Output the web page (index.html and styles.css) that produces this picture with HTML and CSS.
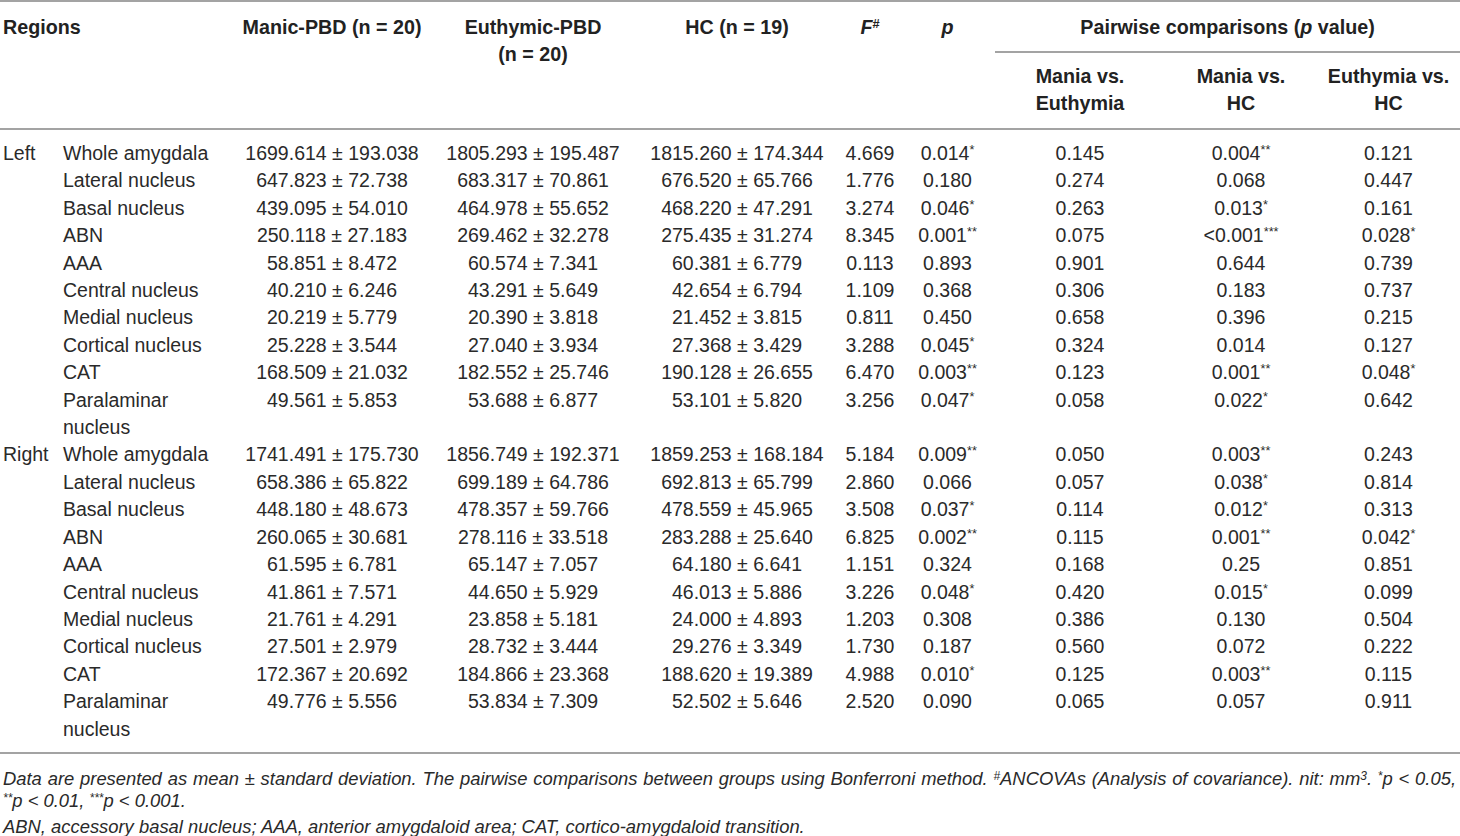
FILE: index.html
```html
<!DOCTYPE html>
<html>
<head>
<meta charset="utf-8">
<link rel="stylesheet" href="styles.css">
</head>
<body>
<table class="tbl">
  <colgroup>
    <col class="c1"><col class="c2"><col class="c3"><col class="c4"><col class="c5">
    <col class="c6"><col class="c7"><col class="c8"><col class="c9"><col class="c10">
  </colgroup>
  <thead>
    <tr class="h1">
      <th colspan="2" rowspan="2" class="left">Regions</th>
      <th rowspan="2">Manic-PBD (n = 20)</th>
      <th rowspan="2">Euthymic-PBD<br>(n = 20)</th>
      <th rowspan="2">HC (n = 19)</th>
      <th rowspan="2"><i>F</i><sup class="s">#</sup></th>
      <th rowspan="2"><i>p</i></th>
      <th colspan="3" class="pw">Pairwise comparisons (<i>p</i> value)</th>
    </tr>
    <tr class="h2">
      <th>Mania vs.<br>Euthymia</th>
      <th>Mania vs.<br>HC</th>
      <th>Euthymia vs.<br>HC</th>
    </tr>
  </thead>
  <tbody>
    <tr class="first">
      <td class="side" rowspan="10">Left</td>
      <td class="reg">Whole amygdala</td><td>1699.614 ± 193.038</td><td>1805.293 ± 195.487</td><td>1815.260 ± 174.344</td><td>4.669</td><td>0.014<sup class="s">*</sup></td><td>0.145</td><td>0.004<sup class="s">**</sup></td><td>0.121</td>
    </tr>
    <tr><td class="reg">Lateral nucleus</td><td>647.823 ± 72.738</td><td>683.317 ± 70.861</td><td>676.520 ± 65.766</td><td>1.776</td><td>0.180</td><td>0.274</td><td>0.068</td><td>0.447</td></tr>
    <tr><td class="reg">Basal nucleus</td><td>439.095 ± 54.010</td><td>464.978 ± 55.652</td><td>468.220 ± 47.291</td><td>3.274</td><td>0.046<sup class="s">*</sup></td><td>0.263</td><td>0.013<sup class="s">*</sup></td><td>0.161</td></tr>
    <tr><td class="reg">ABN</td><td>250.118 ± 27.183</td><td>269.462 ± 32.278</td><td>275.435 ± 31.274</td><td>8.345</td><td>0.001<sup class="s">**</sup></td><td>0.075</td><td>&lt;0.001<sup class="s">***</sup></td><td>0.028<sup class="s">*</sup></td></tr>
    <tr><td class="reg">AAA</td><td>58.851 ± 8.472</td><td>60.574 ± 7.341</td><td>60.381 ± 6.779</td><td>0.113</td><td>0.893</td><td>0.901</td><td>0.644</td><td>0.739</td></tr>
    <tr><td class="reg">Central nucleus</td><td>40.210 ± 6.246</td><td>43.291 ± 5.649</td><td>42.654 ± 6.794</td><td>1.109</td><td>0.368</td><td>0.306</td><td>0.183</td><td>0.737</td></tr>
    <tr><td class="reg">Medial nucleus</td><td>20.219 ± 5.779</td><td>20.390 ± 3.818</td><td>21.452 ± 3.815</td><td>0.811</td><td>0.450</td><td>0.658</td><td>0.396</td><td>0.215</td></tr>
    <tr><td class="reg">Cortical nucleus</td><td>25.228 ± 3.544</td><td>27.040 ± 3.934</td><td>27.368 ± 3.429</td><td>3.288</td><td>0.045<sup class="s">*</sup></td><td>0.324</td><td>0.014</td><td>0.127</td></tr>
    <tr><td class="reg">CAT</td><td>168.509 ± 21.032</td><td>182.552 ± 25.746</td><td>190.128 ± 26.655</td><td>6.470</td><td>0.003<sup class="s">**</sup></td><td>0.123</td><td>0.001<sup class="s">**</sup></td><td>0.048<sup class="s">*</sup></td></tr>
    <tr><td class="reg">Paralaminar<br>nucleus</td><td>49.561 ± 5.853</td><td>53.688 ± 6.877</td><td>53.101 ± 5.820</td><td>3.256</td><td>0.047<sup class="s">*</sup></td><td>0.058</td><td>0.022<sup class="s">*</sup></td><td>0.642</td></tr>
    <tr>
      <td class="side" rowspan="10">Right</td>
      <td class="reg">Whole amygdala</td><td>1741.491 ± 175.730</td><td>1856.749 ± 192.371</td><td>1859.253 ± 168.184</td><td>5.184</td><td>0.009<sup class="s">**</sup></td><td>0.050</td><td>0.003<sup class="s">**</sup></td><td>0.243</td>
    </tr>
    <tr><td class="reg">Lateral nucleus</td><td>658.386 ± 65.822</td><td>699.189 ± 64.786</td><td>692.813 ± 65.799</td><td>2.860</td><td>0.066</td><td>0.057</td><td>0.038<sup class="s">*</sup></td><td>0.814</td></tr>
    <tr><td class="reg">Basal nucleus</td><td>448.180 ± 48.673</td><td>478.357 ± 59.766</td><td>478.559 ± 45.965</td><td>3.508</td><td>0.037<sup class="s">*</sup></td><td>0.114</td><td>0.012<sup class="s">*</sup></td><td>0.313</td></tr>
    <tr><td class="reg">ABN</td><td>260.065 ± 30.681</td><td>278.116 ± 33.518</td><td>283.288 ± 25.640</td><td>6.825</td><td>0.002<sup class="s">**</sup></td><td>0.115</td><td>0.001<sup class="s">**</sup></td><td>0.042<sup class="s">*</sup></td></tr>
    <tr><td class="reg">AAA</td><td>61.595 ± 6.781</td><td>65.147 ± 7.057</td><td>64.180 ± 6.641</td><td>1.151</td><td>0.324</td><td>0.168</td><td>0.25</td><td>0.851</td></tr>
    <tr><td class="reg">Central nucleus</td><td>41.861 ± 7.571</td><td>44.650 ± 5.929</td><td>46.013 ± 5.886</td><td>3.226</td><td>0.048<sup class="s">*</sup></td><td>0.420</td><td>0.015<sup class="s">*</sup></td><td>0.099</td></tr>
    <tr><td class="reg">Medial nucleus</td><td>21.761 ± 4.291</td><td>23.858 ± 5.181</td><td>24.000 ± 4.893</td><td>1.203</td><td>0.308</td><td>0.386</td><td>0.130</td><td>0.504</td></tr>
    <tr><td class="reg">Cortical nucleus</td><td>27.501 ± 2.979</td><td>28.732 ± 3.444</td><td>29.276 ± 3.349</td><td>1.730</td><td>0.187</td><td>0.560</td><td>0.072</td><td>0.222</td></tr>
    <tr><td class="reg">CAT</td><td>172.367 ± 20.692</td><td>184.866 ± 23.368</td><td>188.620 ± 19.389</td><td>4.988</td><td>0.010<sup class="s">*</sup></td><td>0.125</td><td>0.003<sup class="s">**</sup></td><td>0.115</td></tr>
    <tr class="last"><td class="reg">Paralaminar<br>nucleus</td><td>49.776 ± 5.556</td><td>53.834 ± 7.309</td><td>52.502 ± 5.646</td><td>2.520</td><td>0.090</td><td>0.065</td><td>0.057</td><td>0.911</td></tr>
  </tbody>
</table>
<div class="notes">
  <p class="note">Data are presented as mean ± standard deviation. The pairwise comparisons between groups using Bonferroni method. <sup class="s">#</sup>ANCOVAs (Analysis of covariance). nit: mm<sup class="s">3</sup>. <sup class="s">*</sup>p &lt; 0.05, <sup class="s">**</sup>p &lt; 0.01, <sup class="s">***</sup>p &lt; 0.001.</p>
  <p class="note">ABN, accessory basal nucleus; AAA, anterior amygdaloid area; CAT, cortico-amygdaloid transition.</p>
</div>
</body>
</html>
```
FILE: styles.css
```css
html, body {
  margin: 0;
  padding: 0;
  background: #ffffff;
}
body {
  font-family: "Liberation Sans", Arial, sans-serif;
  color: #2a2a2a;
  width: 1460px;
}
.tbl {
  width: 1460px;
  border-collapse: collapse;
  table-layout: fixed;
  font-size: 19.5px;
  line-height: 27.4px;
  border-top: 2px solid #a3a3a3;
}
.c1 { width: 58px; }
.c2 { width: 174px; }
.c3 { width: 200px; }
.c4 { width: 202px; }
.c5 { width: 206px; }
.c6 { width: 60px; }
.c7 { width: 95px; }
.c8 { width: 170px; }
.c9 { width: 152px; }
.c10 { width: 143px; }

th {
  font-weight: bold;
  font-size: 19.7px;
  line-height: 27px;
  color: #222;
  vertical-align: top;
  text-align: center;
  padding: 12px 0 0 0;
}
thead {
  border-bottom: 2px solid #a3a3a3;
}
th.left {
  text-align: left;
  padding-left: 3px;
}
th.pw {
  padding: 12px 0 10px 0;
  border-bottom: 2px solid #a3a3a3;
}
.h2 th {
  padding: 10px 0 11px 0;
}
td {
  padding: 0;
  text-align: center;
  vertical-align: top;
  white-space: nowrap;
}
td.side {
  text-align: left;
  padding-left: 3px;
}
td.reg {
  text-align: left;
  padding-left: 5px;
}
tr.first td {
  padding-top: 10px;
}
tr.last td {
  padding-bottom: 9px;
}
tbody {
  border-bottom: 2px solid #a3a3a3;
}
.s {
  font-size: 0.65em;
  line-height: 0;
  vertical-align: 0.45em;
}
.notes {
  padding: 14px 4px 0 3px;
}
.note {
  margin: 0 0 4px 0;
  font-style: italic;
  font-size: 18.4px;
  line-height: 22px;
  text-align: justify;
  color: #2a2a2a;
}
```
